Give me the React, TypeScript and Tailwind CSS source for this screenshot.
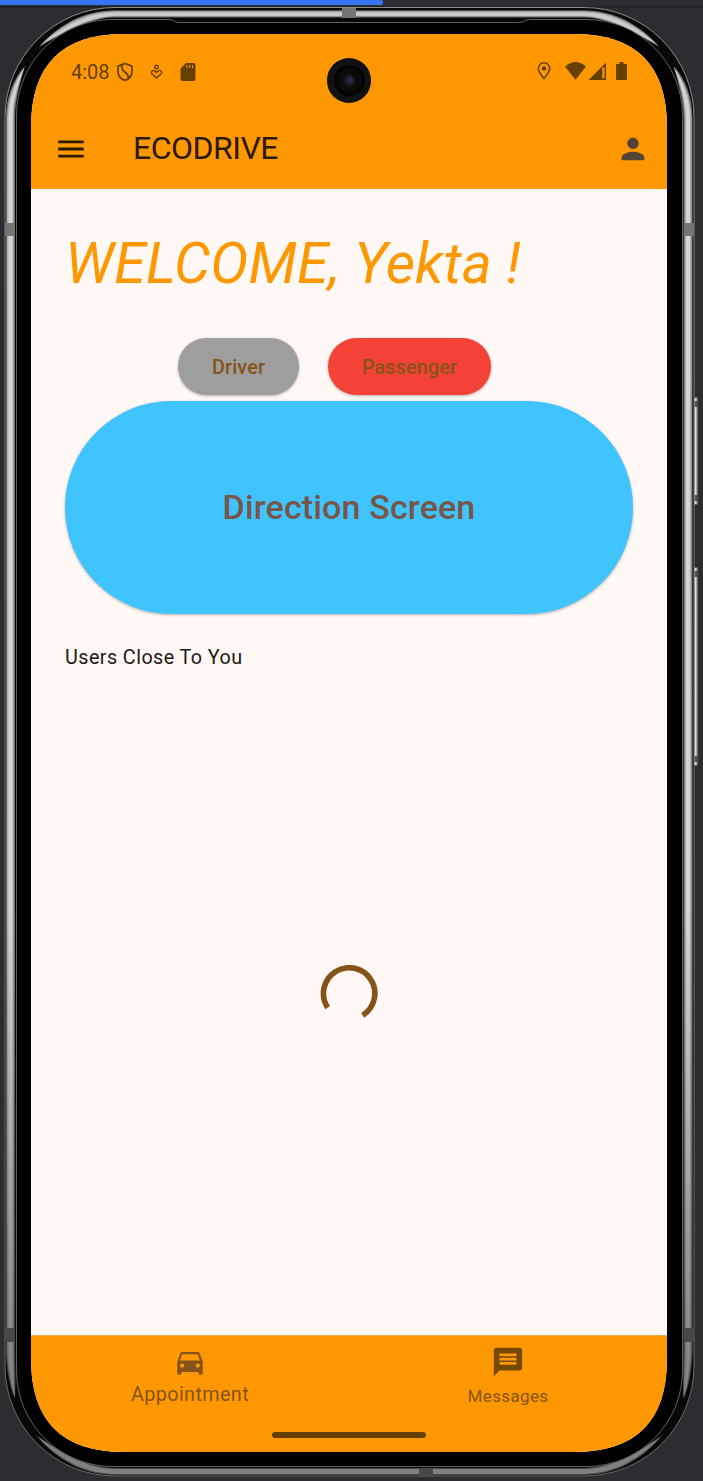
import React from "react";
import { MdMenu, MdPerson, MdDirectionsCar, MdMessage } from "react-icons/md";

function DeviceFrame() {
  return (
    <svg className="absolute left-0 top-0" width="703" height="1481" viewBox="0 0 703 1481" aria-hidden="true">
      <defs>
        <linearGradient id="shell" x1="0" y1="7" x2="0" y2="1476" gradientUnits="userSpaceOnUse">
          <stop offset="0" stopColor="#8d8d8d" />
          <stop offset="1" stopColor="#686868" />
        </linearGradient>
        <linearGradient id="fade" x1="0" y1="900" x2="0" y2="1400" gradientUnits="userSpaceOnUse">
          <stop offset="0" stopColor="#000" stopOpacity="0" />
          <stop offset="1" stopColor="#000" stopOpacity="0.4" />
        </linearGradient>
        <g id="side">
          <path d="M6 118C6 97 13 79 24.800 66C20 84 15 100 15 118V1342C15 1365 15.500 1385 15 1399C8.500 1384 6 1365 6 1345Z" fill="#6a6a6a" />
          <path d="M7 118C7.500 98 14 81 24.500 67C19 84 13.800 100 13.800 118V1342C13.800 1365 15 1385 14.800 1397C9.500 1384 7 1365 7 1345Z" fill="#aeaeae" />
          <path d="M8.500 118C9 100 15 82 24 69C17 86 12.500 101 12.500 118V1342C12.500 1365 14 1385 14.500 1396C10.500 1384 8.500 1365 8.500 1345Z" fill="#d4d4d4" />
          <path d="M6 118V900H15V1342C15 1365 15.500 1385 15 1399C8.500 1384 6 1365 6 1345Z" fill="url(#fade)" />
        </g>
      </defs>
      <path d="M0 7H703" stroke="#1e1f22" strokeWidth="1.5" />
      <rect x="693.500" y="397" width="4.500" height="108" rx="2" fill="#70706e" />
      <rect x="693.500" y="567" width="4.500" height="199" rx="2" fill="#70706e" />
      <path d="M694.500 398h2v106h-2zM694.500 568h2v197h-2z" fill="#dededc" />
      <path d="M694.500 401h3v6h-3zM694.500 495h3v6h-3zM694.500 571h3v6h-3zM694.500 756h3v6h-3z" fill="#333" fillOpacity="0.8" />
      <rect x="5" y="7.500" width="689" height="1468.500" rx="110" fill="#080808" stroke="url(#shell)" strokeWidth="1" />
      <path d="M39 47C58 25 84 10.300 115 10.300H583.500C614.500 10.300 640.500 25 659.500 47C631 30 606 17.500 583.500 17.500H115C92.500 17.500 67.500 30 39 47Z" fill="#6a6a6a" />
      <path d="M40 46C59 26 85 11.300 115 11.300H583.500C613.500 11.300 639.500 26 658.500 46C630 29 605 16.500 583.500 16.500H115C93.500 16.500 68.500 29 40 46Z" fill="#aeaeae" />
      <path d="M44 43C62 27 87 12.500 115 12.500H583.500C611.500 12.500 636.500 27 654.500 43C630 28 605 15.700 583.500 15.700H115C93.500 15.700 68.500 28 44 43Z" fill="#ceccca" />
      <use href="#side" />
      <g transform="translate(698.500 0) scale(-1 1)">
        <use href="#side" />
      </g>
      <path d="M36 1435C57 1461 85 1475 115 1475H583.500C613.500 1475 641.500 1461 662.500 1435C635 1454 608 1468 583.500 1468H115C90.500 1468 63.500 1454 36 1435Z" fill="#4a4a4a" />
      <path d="M38 1437C59 1460 87 1474 115 1474H583.500C611.500 1474 639.500 1460 660.500 1437C634 1456 608 1469 583.500 1469H115C90.500 1469 64.500 1456 38 1437Z" fill="#808080" />
      <path d="M112 19.500H168C174 19.500 173 22.500 180 22.500H518.500C525.500 22.500 524.500 19.500 530.500 19.500H586.500A96 96 0 0 1 682.500 115.500V1370.500A96 96 0 0 1 586.500 1466.500H112.500A96 96 0 0 1 16.500 1370.500V115.500A96 96 0 0 1 112 19.500Z" fill="#000" stroke="#6c6c6c" strokeWidth="0.9" />
      <path d="M342 8h14v10h-14zM5 223h10v13H5zM684 223h10v13h-10z" fill="#747472" />
      <path d="M5 1328h10v14H5zM684 1328h10v14h-10zM419 1468h14v8h-14z" fill="#484848" />
    </svg>
  );
}

function StatusBar() {
  return (
    <div className="flex h-[75px] shrink-0 items-center pl-[40px] text-[#664000]">
      <span className="w-[45px] text-[20px] leading-[24px]">4:08</span>
      <svg width="18" height="20" viewBox="0 0 18 20" fill="none" stroke="currentColor" strokeWidth="1.8">
        <path d="M9 1.500L16 4.200V9.500C16 13.700 13.200 17 9 18.400C4.800 17 2 13.700 2 9.500V4.200Z" />
        <path d="M6 2.800C5.500 7.500 7 8.800 9.500 10.500C12 12.300 12.500 13.500 12.500 16" />
      </svg>
      <svg className="ml-[16px] mt-[1px]" width="13" height="16" viewBox="0 0 13 16" fill="none" stroke="currentColor" strokeWidth="1.400">
        <circle cx="6.500" cy="3" r="1.800" />
        <path d="M6.500 14L2.300 10.200C.2 8 2.600 5.300 5 7L6.500 8.500L8 7C10.400 5.300 12.800 8 10.700 10.200Z" />
      </svg>
      <svg className="ml-[17px]" width="16" height="18" viewBox="0 0 16 18" fill="currentColor">
        <path fillRule="evenodd" d="M6 0H13.500Q15.500 0 15.500 2V16Q15.500 18 13.500 18H2.500Q.5 18 .5 16V5.500ZM6.500 2V5H7.500V2ZM9.200 2V5H10.200V2ZM12 2V5H13V2Z" />
      </svg>
      <svg className="ml-[341px] -mt-[1px]" width="14" height="18" viewBox="0 0 14 18" fill="none" stroke="currentColor" strokeWidth="1.600">
        <path d="M7 16.500C4 12.800 1.300 9.500 1.300 6.500A5.700 5.700 0 0 1 12.700 6.500C12.700 9.500 10 12.800 7 16.500Z" />
        <circle cx="7" cy="6.500" r="2.200" fill="currentColor" stroke="none" />
      </svg>
      <svg className="ml-[14px] -mt-[2px]" width="21" height="18" viewBox="0 0 21 18" fill="currentColor">
        <path d="M0 4.500Q10.500-4.500 21 4.500L10.500 17.800Z" />
      </svg>
      <svg className="ml-[2px] -mt-[1px]" width="18" height="18" viewBox="0 0 18 18" fill="currentColor">
        <path fillRule="evenodd" d="M18 .5V18H.5ZM14.300 5.500V16.300H16.500V5.500Z" />
      </svg>
      <svg className="ml-[10px] -mt-[1px]" width="11" height="18" viewBox="0 0 11 18" fill="currentColor">
        <path d="M3.500 0H7.500V2H10Q11 2 11 3V17Q11 18 10 18H1Q0 18 0 17V3Q0 2 1 2H3.500Z" />
      </svg>
    </div>
  );
}

export default function App() {
  return (
    <div className="relative h-[1481px] w-[703px] overflow-hidden bg-[#2b2d30] pl-[31px] font-[Roboto,sans-serif]">
      <DeviceFrame />
      <div className="absolute left-0 top-0 h-[5px] w-[383px] rounded-r-[2px] bg-[#3574f0]" />
      <div className="h-[34px]" />
      <main className="relative flex h-[1418px] w-[636px] flex-col overflow-hidden bg-[#fff8f5] [clip-path:path('M0_93C0_31_31_0_93_0H543C605_0_636_31_636_93V1325C636_1387_605_1418_543_1418H93C31_1418_0_1387_0_1325Z')]">
        <header className="flex h-[155px] shrink-0 flex-col bg-[#ff9800]">
          <StatusBar />
          <div className="flex h-[80px] items-center pl-[23px] pr-[17px]">
            <MdMenu size={34} color="#2c1a08" />
            <h1 className="-mt-[2px] ml-[45px] flex-1 text-[32px] leading-[40px] tracking-[-0.5px] text-[#2c1a08]">ECODRIVE</h1>
            <MdPerson size={34} color="#554336" />
          </div>
        </header>

        <section className="flex flex-1 flex-col px-[34px]">
          <h2 className="mt-[42px] whitespace-nowrap text-[57px] italic leading-[66px] tracking-[0.22px] text-[#ff9800]">WELCOME, Yekta !</h2>
          <div className="mt-[41px] flex gap-[29px] pl-[113px] text-[19.8px] font-medium tracking-[0.14px] text-[#855318]">
            <button className="h-[57px] w-[121px] rounded-full bg-[#9e9e9e] pt-[2px] shadow-[0_1px_3px_rgba(0,0,0,0.3)]">Driver</button>
            <button className="h-[57px] w-[163px] rounded-full bg-[#f44336] pt-[2px] shadow-[0_1px_3px_rgba(0,0,0,0.3)]">Passenger</button>
          </div>
          <button className="mt-[6px] h-[213px] w-[568px] shrink-0 rounded-full bg-[#40c4ff] text-[34px] font-medium tracking-[0.14px] text-[#795548] shadow-[0_1px_3px_rgba(0,0,0,0.3)]">
            Direction Screen
          </button>
          <p className="mt-[30px] text-[19.8px] leading-[28px] tracking-[0.42px] text-[#221a14]">Users Close To You</p>
          <div className="mt-[293px] flex justify-center">
            <svg width="58" height="57" viewBox="0 0 58 57" fill="none">
              <path d="M7.700 42.600A25.700 25.700 0 1 1 42.700 50.300" stroke="#855318" strokeWidth="5.600" />
            </svg>
          </div>
        </section>

        <nav className="relative flex h-[117px] shrink-0 bg-[#ff9800] shadow-[inset_0_1px_0_#e9ac50]">
          <div className="flex w-1/2 flex-col items-center pt-[10px] text-[#855318]">
            <MdDirectionsCar size={34} />
            <span className="mt-[2px] text-[19.8px] leading-[28px] tracking-[0.38px]">Appointment</span>
          </div>
          <div className="flex w-1/2 flex-col items-center pt-[10px] text-[#754800]">
            <MdMessage size={34} />
            <span className="mt-[6px] text-[17px] leading-[23px] tracking-[0.35px] text-[#855318]">Messages</span>
          </div>
          <div className="absolute left-[241px] top-[97px] h-[6px] w-[154px] rounded-full bg-[#664000]" />
        </nav>

        <div className="absolute left-[296px] top-[24px] flex h-[45px] w-[44px] items-center justify-center rounded-full bg-[#121213]">
          <div className="flex size-[31px] items-center justify-center rounded-full bg-[radial-gradient(circle,#0b0b0e_50%,#020203_65%)]">
            <div className="size-[12px] rounded-full bg-[radial-gradient(circle_at_60%_40%,#432a66_0%,#1d1c2b_35%,#161a20_55%,#0b0b0e_75%)]" />
          </div>
        </div>
      </main>
    </div>
  );
}
